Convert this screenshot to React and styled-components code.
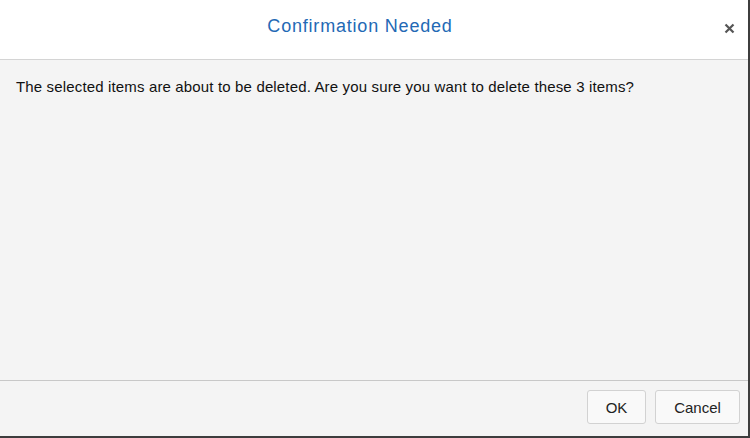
import React from "react";
import styled, { createGlobalStyle } from "styled-components";

const Global = createGlobalStyle`
  html, body { margin: 0; padding: 0; background: #3d3d3d; }
  body { font-family: "Liberation Sans", Arial, sans-serif; }
  #root { width: 750px; height: 438px; }
`;

const Dialog = styled.div`
  width: 748px;
  height: 436px;
  background: #f4f4f4;
  display: flex;
  flex-direction: column;
  box-sizing: border-box;
`;

const Header = styled.div`
  position: relative;
  height: 60px;
  flex: none;
  background: #ffffff;
  border-bottom: 1px solid #d4d4d4;
  box-sizing: border-box;
  display: flex;
  align-items: center;
  justify-content: center;
  padding-right: 28px;
`;

const Title = styled.h1`
  margin: 0 0 7px 0;
  font-size: 18px;
  font-weight: normal;
  letter-spacing: 0.8px;
  color: #2369b5;
`;

const Close = styled.button`
  position: absolute;
  right: 9px;
  top: 18px;
  width: 20px;
  height: 20px;
  border: none;
  background: none;
  padding: 0;
  display: flex;
  align-items: center;
  justify-content: center;
  cursor: pointer;
`;

const Body = styled.div`
  flex: 1;
  padding: 18px 16px;
  font-size: 15px;
  letter-spacing: 0.15px;
  color: #111;
`;

const Footer = styled.div`
  height: 56px;
  flex: none;
  border-top: 1px solid #c8c8c8;
  box-sizing: border-box;
  display: flex;
  justify-content: flex-end;
  align-items: flex-start;
  gap: 9px;
  padding: 9px 8px 0 0;
`;

const Button = styled.button`
  height: 34px;
  min-width: ${(p) => p.$w}px;
  padding: 0 16px;
  box-sizing: border-box;
  border: 1px solid #d2d2d2;
  border-radius: 3px;
  background: #f9f9f9;
  font-family: "Liberation Sans", Arial, sans-serif;
  font-size: 15px;
  color: #222;
  cursor: pointer;
`;

export default function App() {
  return (
    <>
      <Global />
      <Dialog>
        <Header>
          <Title>Confirmation Needed</Title>
          <Close aria-label="Close">
            <svg width="11" height="11" viewBox="0 0 11 11">
              <path d="M1.5 1.5 L9.5 9.5 M9.5 1.5 L1.5 9.5" stroke="#555" strokeWidth="2.2" strokeLinecap="butt" />
            </svg>
          </Close>
        </Header>
        <Body>
          The selected items are about to be deleted. Are you sure you want to delete these 3 items?
        </Body>
        <Footer>
          <Button $w={59}>OK</Button>
          <Button $w={85}>Cancel</Button>
        </Footer>
      </Dialog>
    </>
  );
}
